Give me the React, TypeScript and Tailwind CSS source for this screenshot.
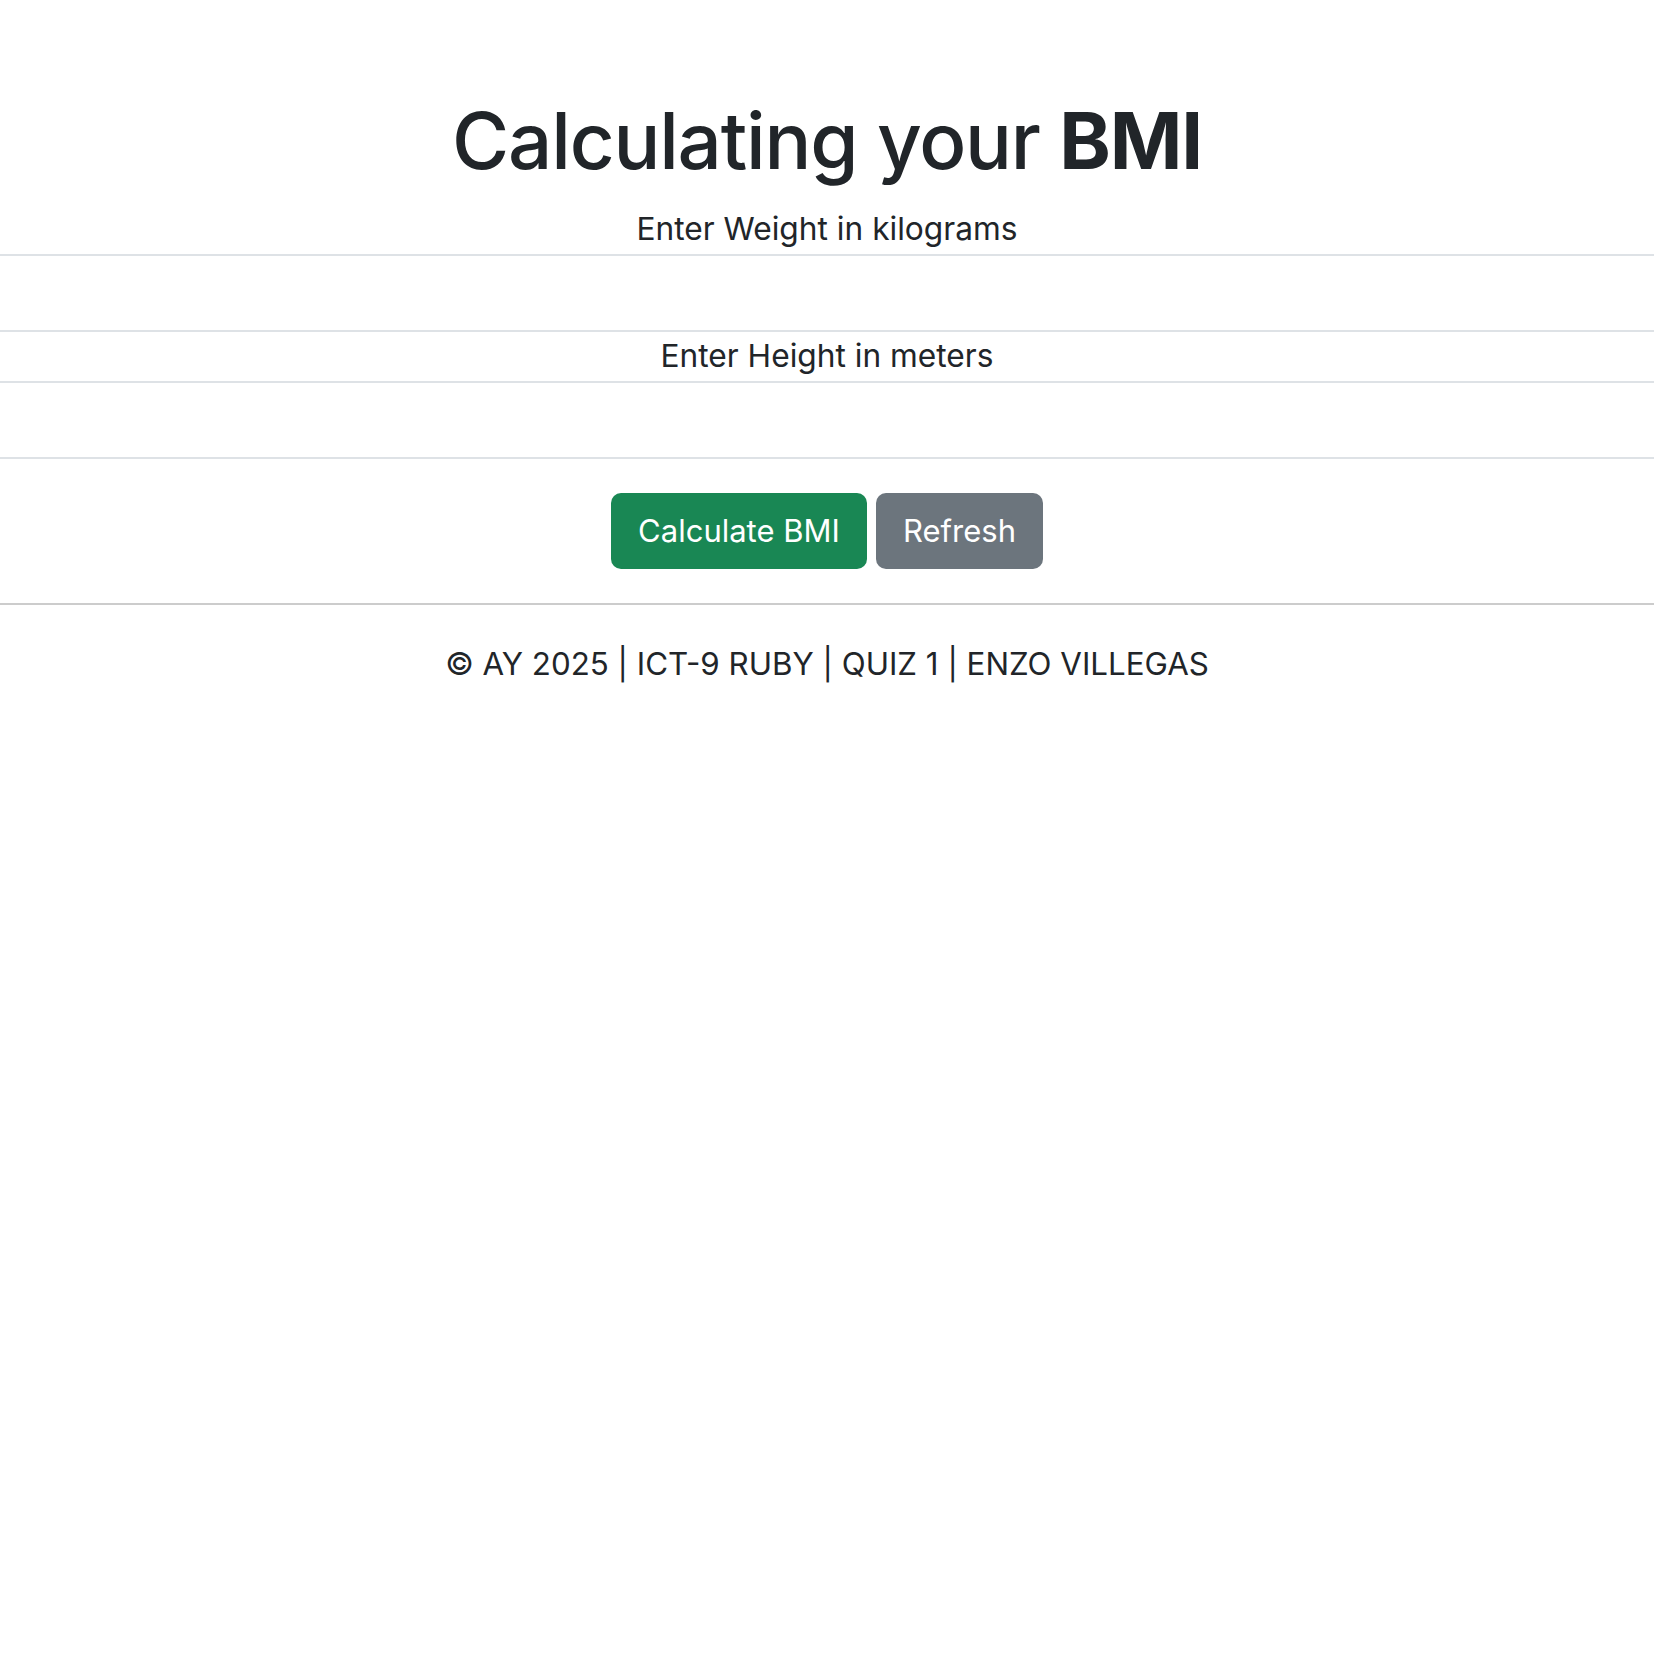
import { useState } from "react";

const App = () => {
  const [weight, setWeight] = useState("");
  const [height, setHeight] = useState("");

  return (
    <div className="min-h-screen bg-white text-[#212529] font-['Inter','Liberation_Sans',sans-serif]">
      <main className="flex flex-col items-center pt-[93px]">
        <h1 className="text-[78px] leading-[96px] font-medium tracking-[-1.2px]">
          Calculating your <span className="font-bold">BMI</span>
        </h1>

        <form className="mt-[16px] w-full text-center" onSubmit={(e) => e.preventDefault()}>
          <label htmlFor="weight" className="block h-[49px] text-[31.7px] leading-[48px]">
            Enter Weight in kilograms
          </label>
          <input
            id="weight"
            type="text"
            value={weight}
            onChange={(e) => setWeight(e.target.value)}
            className="block h-[78px] w-full border-y-2 border-[#dee2e6] bg-white text-[30px] outline-none"
          />

          <label htmlFor="height" className="block h-[49px] text-[31.7px] leading-[48px]">
            Enter Height in meters
          </label>
          <input
            id="height"
            type="text"
            value={height}
            onChange={(e) => setHeight(e.target.value)}
            className="block h-[78px] w-full border-y-2 border-[#dee2e6] bg-white text-[30px] outline-none"
          />

          <div className="mt-[34px] flex justify-center gap-[9px]">
            <button
              type="submit"
              className="h-[76px] w-[256px] rounded-[10px] bg-[#198754] text-[31px] text-white"
            >
              Calculate BMI
            </button>
            <button
              type="button"
              onClick={() => {
                setWeight("");
                setHeight("");
              }}
              className="h-[76px] w-[167px] rounded-[10px] bg-[#6c757d] text-[31px] text-white"
            >
              Refresh
            </button>
          </div>
        </form>
      </main>

      <hr className="mt-[34px] border-t-2 border-[#cccccc]" />

      <footer className="pt-[35px] text-center text-[31.3px] leading-[48px]">
        © AY 2025 | ICT-9 RUBY | QUIZ 1 | ENZO VILLEGAS
      </footer>
    </div>
  );
};

export default App;
